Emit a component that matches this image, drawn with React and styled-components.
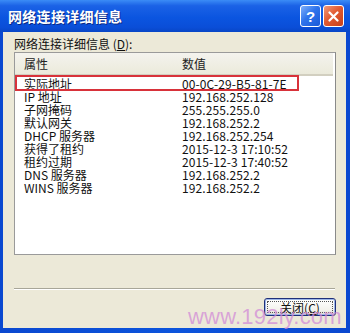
import React from "react";
import styled, { createGlobalStyle } from "styled-components";

const GlobalStyle = createGlobalStyle`
  html, body { margin: 0; padding: 0; background: #fff; }
  body { font-family: "Noto Sans CJK SC", "Liberation Sans", sans-serif; }
`;

const Window = styled.div`
  position: relative;
  width: 350px;
  height: 333px;
  display: flex;
  flex-direction: column;
  background: linear-gradient(90deg, #0a48d0 0%, #0c54dc 50%, #0a48d0 100%);
  overflow: hidden;
`;

const TitleBar = styled.div`
  height: 32px;
  display: flex;
  align-items: center;
  padding: 0 6px 0 8px;
  background: linear-gradient(180deg, #3b8cf6 0%, #1b62e6 18%, #0b55e0 55%, #0a4ed8 85%, #0846c6 100%);
`;

const Title = styled.div`
  flex: 1;
  color: #fff;
  font-size: 14px;
  font-weight: 700;
  letter-spacing: 0.3px;
  text-shadow: 1px 1px 0 #0a2a86;
`;

const CapButton = styled.div`
  width: 19px;
  height: 20px;
  margin-left: 2px;
  border: 1px solid #fff;
  border-radius: 3px;
  display: flex;
  align-items: center;
  justify-content: center;
  color: #fff;
  font-family: "Liberation Sans", sans-serif;
  font-weight: 700;
  font-size: 15px;
  background: ${(p) =>
    p.$close
      ? "linear-gradient(135deg, #f09a7a 0%, #e25a32 45%, #c8401a 100%)"
      : "linear-gradient(135deg, #7fb0fa 0%, #2f74ec 45%, #1a58d8 100%)"};
`;

const Body = styled.div`
  flex: 1;
  margin: 0 4px 5px 3px;
  background: #ece9d8;
  display: flex;
  flex-direction: column;
  padding: 4px 10px 0 11px;
`;

const Label = styled.div`
  font-size: 12px;
  line-height: 15px;
  color: #111;
  margin-bottom: 1px;
`;

const ListBox = styled.div`
  position: relative;
  height: 201px;
  background: #fff;
  border: 1px solid #9a9a9a;
  border-right-color: #8a8a8a;
`;

const Header = styled.div`
  display: flex;
  height: 21px;
  align-items: center;
  background: linear-gradient(180deg, #f4f3ee 0%, #ebeadb 100%);
  border-bottom: 2px solid #d2cfc0;
  margin-right: 2px;
  font-size: 12px;
  color: #222;
`;

const Row = styled.div`
  display: flex;
  height: 13px;
  align-items: center;
  font-size: 12px;
  color: #111;
`;

const NameCell = styled.div`
  box-sizing: border-box;
  width: 167px;
  padding-left: 9px;
  white-space: nowrap;
`;

const ValueCell = styled.div`
  white-space: nowrap;
  letter-spacing: 0.1px;
`;

const Rows = styled.div`
  padding-top: 1px;
`;

const Highlight = styled.div`
  position: absolute;
  left: 0px;
  top: 22px;
  width: 280px;
  height: 12px;
  border: 2px solid #d8323a;
`;

const Separator = styled.div`
  margin-top: 33px;
  height: 0;
  border-top: 1px solid #a8a698;
  border-bottom: 1px solid #fff;
  margin-right: 1px;
`;

const Footer = styled.div`
  display: flex;
  justify-content: flex-end;
  padding-top: 8px;
`;

const PushButton = styled.div`
  width: 70px;
  height: 16px;
  border: 1px solid #20307a;
  border-radius: 3px;
  background: linear-gradient(180deg, #ffffff 0%, #f3f2ec 70%, #d8d6cc 100%);
  box-shadow: inset 0 0 0 1px #9cb6e8;
  display: flex;
  align-items: center;
  justify-content: center;
  font-size: 12px;
  color: #111;
  outline: 1px dotted #555;
  outline-offset: -4px;
`;

const Watermark = styled.div`
  position: absolute;
  left: 188px;
  top: 304px;
  font-family: "Liberation Sans", sans-serif;
  font-size: 22px;
  letter-spacing: 0.2px;
  color: rgba(210, 140, 215, 0.75);
  pointer-events: none;
`;

const rows = [
  ["实际地址", "00-0C-29-B5-81-7E"],
  ["IP 地址", "192.168.252.128"],
  ["子网掩码", "255.255.255.0"],
  ["默认网关", "192.168.252.2"],
  ["DHCP 服务器", "192.168.252.254"],
  ["获得了租约", "2015-12-3 17:10:52"],
  ["租约过期", "2015-12-3 17:40:52"],
  ["DNS 服务器", "192.168.252.2"],
  ["WINS 服务器", "192.168.252.2"],
];

export default function App() {
  return (
    <>
      <GlobalStyle />
      <Window>
        <TitleBar>
          <Title>网络连接详细信息</Title>
          <CapButton>?</CapButton>
          <CapButton $close>
            <svg width="11" height="11" viewBox="0 0 11 11">
              <path d="M1.5 1.5 L9.5 9.5 M9.5 1.5 L1.5 9.5" stroke="#fff" strokeWidth="2.2" strokeLinecap="round" />
            </svg>
          </CapButton>
        </TitleBar>
        <Body>
          <Label>
            网络连接详细信息 (<u>D</u>):
          </Label>
          <ListBox>
            <Header>
              <NameCell>属性</NameCell>
              <ValueCell>数值</ValueCell>
            </Header>
            <Rows>
              {rows.map(([k, v]) => (
                <Row key={k}>
                  <NameCell>{k}</NameCell>
                  <ValueCell>{v}</ValueCell>
                </Row>
              ))}
            </Rows>
            <Highlight />
          </ListBox>
          <Separator />
          <Footer>
            <PushButton>关闭(<u>C</u>)</PushButton>
          </Footer>
        </Body>
        <Watermark>www.192ly.com</Watermark>
      </Window>
    </>
  );
}
